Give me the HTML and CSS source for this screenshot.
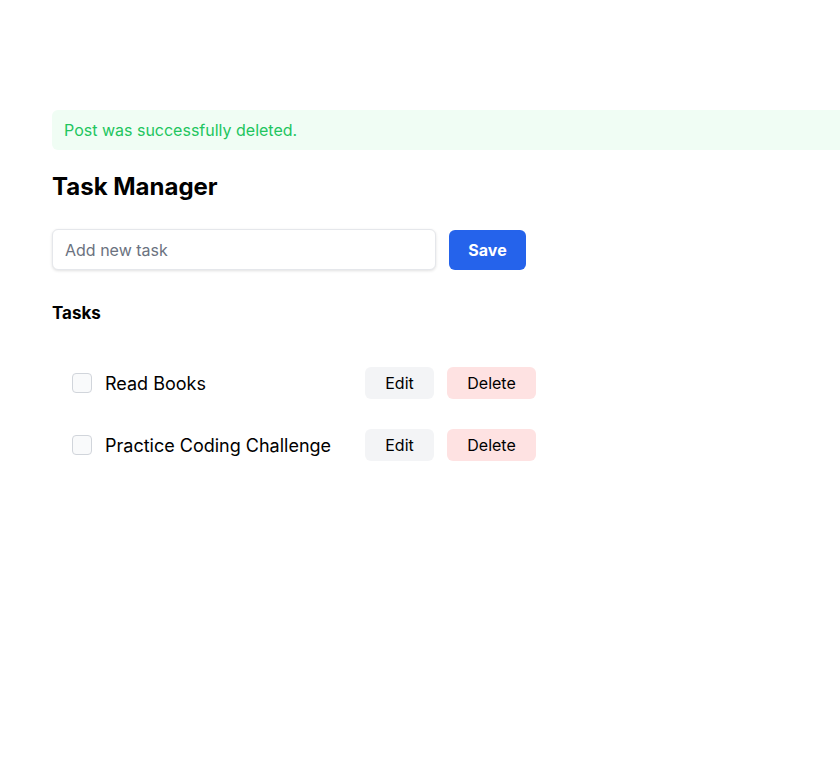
FILE: index.html
```html
<!DOCTYPE html>
<html>
<head>
<meta charset="utf-8">
<link rel="stylesheet" href="styles.css">
</head>
<body>
<main class="page">
  <div class="alert">Post was successfully deleted.</div>
  <h1 class="title">Task Manager</h1>
  <form class="new-task">
    <input class="task-input" type="text" placeholder="Add new task">
    <button class="btn-save" type="button">Save</button>
  </form>
  <h2 class="subtitle">Tasks</h2>
  <ul class="task-list">
    <li class="task">
      <span class="check"></span>
      <span class="task-name">Read Books</span>
      <button class="btn btn-edit" type="button">Edit</button>
      <button class="btn btn-delete" type="button">Delete</button>
    </li>
    <li class="task">
      <span class="check"></span>
      <span class="task-name">Practice Coding Challenge</span>
      <button class="btn btn-edit" type="button">Edit</button>
      <button class="btn btn-delete" type="button">Delete</button>
    </li>
  </ul>
</main>
</body>
</html>
```
FILE: styles.css
```css
* { box-sizing: border-box; }
html, body { margin: 0; padding: 0; background: #fff; overflow: hidden; }
body { font-family: Inter, "Noto Sans", sans-serif; color: #000; }
.page { padding: 110px 0 0 52px; }
.alert {
  height: 40px;
  background: #f0fdf4;
  color: #22c55e;
  font-size: 16px;
  line-height: 40px;
  padding-left: 12px;
  border-radius: 6px 0 0 6px;
}
.title { margin: 21px 0 0; font-size: 24px; font-weight: 700; line-height: 32px; }
.new-task { display: flex; gap: 13px; margin-top: 26px; align-items: center; }
.task-input {
  width: 384px; height: 41px;
  border: 1px solid #e5e7eb; border-radius: 6px;
  box-shadow: 0 1px 3px rgba(0,0,0,0.12);
  padding: 0 12px; font: 16px Inter, sans-serif; color: #111;
}
.task-input::placeholder { color: #6b7280; }
.btn-save {
  width: 77px; height: 40px; border: 0; border-radius: 6px;
  background: #2563eb; color: #fff; font: 700 16px Inter, sans-serif;
}
.subtitle { margin: 31px 0 0; font-size: 17px; font-weight: 700; line-height: 24px; }
.task-list { list-style: none; margin: 42px 0 0; padding: 0 0 0 20px; display: flex; flex-direction: column; gap: 30px; }
.task { display: flex; align-items: center; height: 32px; }
.check {
  width: 20px; height: 20px; border: 1px solid #d1d5db; border-radius: 4px;
  background: #f9fafb; margin-right: 13px;
}
.task-name { width: 260px; font-size: 18px; }
.btn {
  height: 32px; border: 0; border-radius: 6px; font: 16px Inter, sans-serif; color: #000;
}
.btn-edit { width: 69px; background: #f3f4f6; margin-right: 13px; }
.btn-delete { width: 89px; background: #fee2e2; }
```
